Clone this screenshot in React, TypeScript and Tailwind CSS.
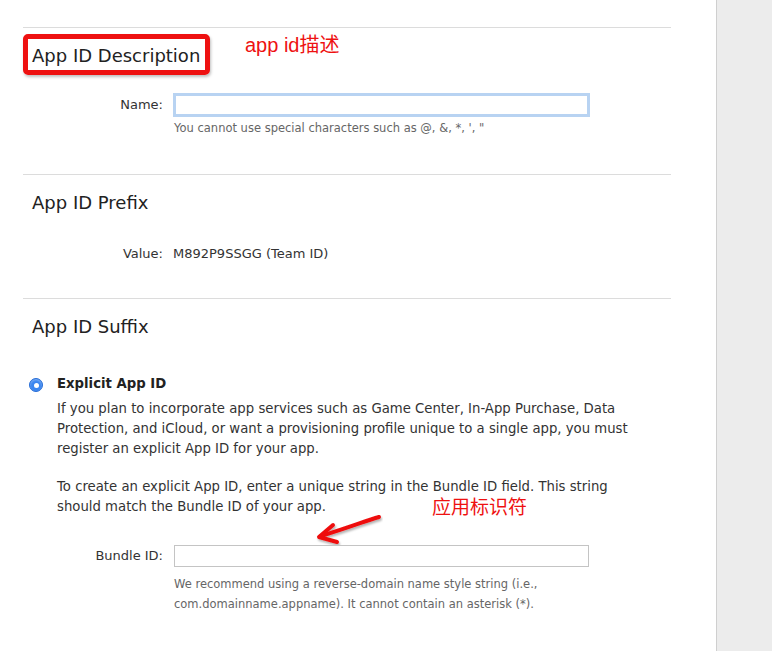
import React from "react";

const font = { fontFamily: '"DejaVu Sans", "Noto Sans CJK SC", sans-serif' };

export default function App() {
  return (
    <div className="flex w-[772px] h-[651px] overflow-hidden bg-white text-[#333]" style={font}>
      <main className="w-[717px] border-r border-[#cfcfcf] bg-white">
        <div className="ml-[23px] w-[648px] mt-[27px]">
          {/* Section 1 */}
          <section className="relative border-t border-[#dcdcdc] h-[147px]">
            <div className="absolute left-0 top-[6px] w-[187px] h-[41px] rounded-[5px] border-[5px] border-[#ee1111] shadow-[1px_2px_3px_rgba(0,0,0,0.25)]" />
            <div className="absolute left-[222px] top-[2px] text-[20px] text-[#ee1111]" style={{ fontFamily: '"Liberation Sans", "Noto Sans CJK SC", sans-serif' }}>
              app id描述
            </div>
            <h2 className="pl-[9px] pt-[16px] text-[18px] leading-[24px] text-[#222]">App ID Description</h2>
            <div className="flex items-center gap-[10px] mt-[25px]">
              <div className="w-[140px] text-right text-[13px] text-[#333]">Name:</div>
              <div className="w-[417px] h-[24px] border-[3px] border-[#b8d3f2] bg-white" />
            </div>
            <div className="pl-[151px] mt-[3px] text-[11.5px] text-[#666]">
              You cannot use special characters such as @, &amp;, *, ', "
            </div>
          </section>

          {/* Section 2 */}
          <section className="border-t border-[#dcdcdc] h-[124px]">
            <h2 className="pl-[9px] pt-[16px] text-[18px] leading-[24px] text-[#222]">App ID Prefix</h2>
            <div className="flex items-center gap-[10px] mt-[29px] text-[13px]">
              <div className="w-[140px] text-right text-[#333]">Value:</div>
              <div className="text-[#333]">M892P9SSGG (Team ID)</div>
            </div>
          </section>

          {/* Section 3 */}
          <section className="relative border-t border-[#dcdcdc]">
            <h2 className="pl-[9px] pt-[16px] text-[18px] leading-[24px] text-[#222]">App ID Suffix</h2>
            <div className="flex mt-[35px]">
              <div className="w-[34px] flex justify-start pt-[4px] pl-[6px]">
                <div className="w-[14px] h-[14px] rounded-full bg-[#3b86f0] border border-[#2a6fd6] flex items-center justify-center shadow-[inset_0_1px_2px_rgba(255,255,255,0.4)]">
                  <div className="w-[5px] h-[5px] rounded-full bg-white" />
                </div>
              </div>
              <div className="text-[13.25px] leading-[20px] text-[#333]">
                <div className="font-bold text-[#222]">Explicit App ID</div>
                <p className="mt-[5px]">
                  If you plan to incorporate app services such as Game Center, In-App Purchase, Data
                  <br />
                  Protection, and iCloud, or want a provisioning profile unique to a single app, you must
                  <br />
                  register an explicit App ID for your app.
                </p>
                <p className="mt-[18px]">
                  To create an explicit App ID, enter a unique string in the Bundle ID field. This string
                  <br />
                  should match the Bundle ID of your app.
                </p>
              </div>
            </div>
            <div className="flex items-center gap-[11px] mt-[28px]">
              <div className="w-[140px] text-right text-[13px] text-[#333]">Bundle ID:</div>
              <div className="w-[415px] h-[22px] border border-[#c4c4c4] bg-white" />
            </div>
            <div className="pl-[151px] mt-[7px] text-[11.5px] leading-[20px] text-[#666]">
              We recommend using a reverse-domain name style string (i.e.,
              <br />
              com.domainname.appname). It cannot contain an asterisk (*).
            </div>

            <div className="absolute left-[409px] top-[193px] text-[19px] text-[#ee1111]" style={{ fontFamily: '"Noto Sans CJK SC", sans-serif' }}>
              应用标识符
            </div>
            <svg className="absolute left-[290px] top-[212px]" width="70" height="34" viewBox="0 0 70 34">
              <defs>
                <filter id="sh" x="-20%" y="-20%" width="140%" height="160%">
                  <feDropShadow dx="1" dy="2" stdDeviation="1.2" floodColor="#000" floodOpacity="0.3" />
                </filter>
              </defs>
              <g filter="url(#sh)" fill="none" stroke="#ee1111" strokeLinecap="round" strokeLinejoin="round">
                <path d="M66 6 C52 10 38 16 8 25" strokeWidth="4" />
                <path d="M20 14 L6 26 L24 31" strokeWidth="4" />
              </g>
            </svg>
          </section>
        </div>
      </main>
      <aside className="flex-1 bg-[#ececec]" />
    </div>
  );
}
